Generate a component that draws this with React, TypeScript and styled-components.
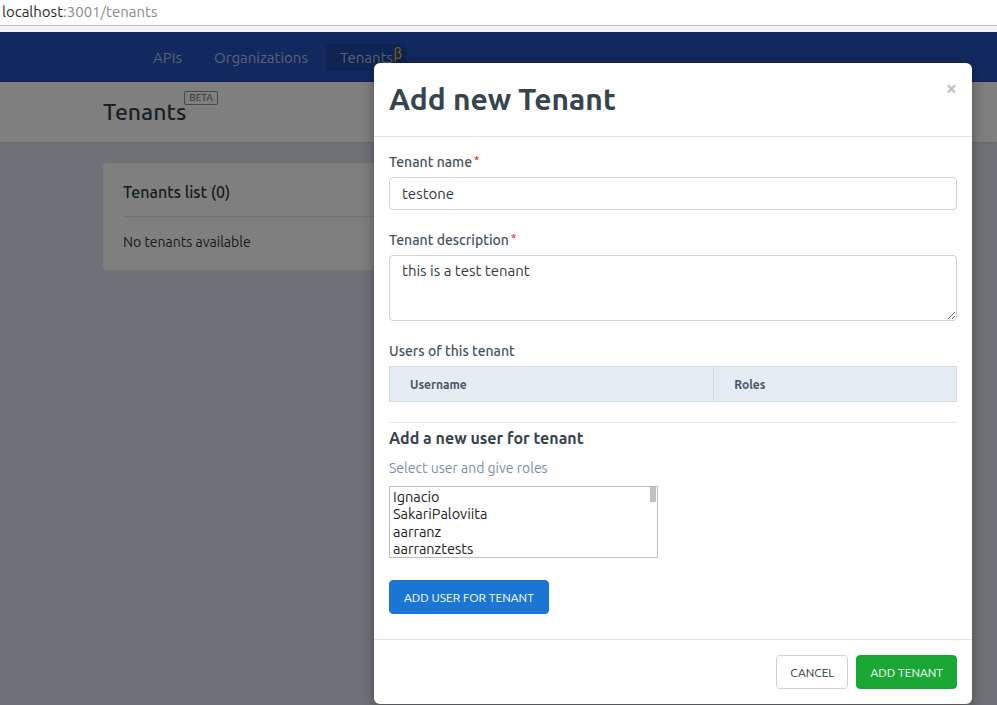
import React from "react";
import styled, { createGlobalStyle } from "styled-components";

const FONT = `"Ubuntu", Lato, "Noto Sans", sans-serif`;

const GlobalStyle = createGlobalStyle`
  html, body { margin: 0; padding: 0; }
  body {
    font-family: ${FONT};
    background: #dee6ee;
    width: 997px;
    height: 705px;
    overflow: hidden;
  }
  * { box-sizing: border-box; }
`;

const Chrome = styled.div`
  height: 32px;
  background: #f3f3f3;
`;

const AddressBar = styled.div`
  height: 26px;
  background: #ffffff;
  border-bottom: 1px solid #c6c6c6;
  padding-left: 2px;
  display: flex;
  align-items: center;
  font-size: 15px;
  color: #2a2a2a;
  line-height: 1;
  padding-bottom: 2px;
`;

const UrlMuted = styled.span`
  color: #8a8a8a;
`;

const Page = styled.div`
  position: relative;
  height: 673px;
`;

const Nav = styled.nav`
  height: 50px;
  background: #2452be;
  display: flex;
  align-items: center;
  gap: 4px;
  padding-left: 139px;
`;

const NavItem = styled.a<{ $active?: boolean }>`
  position: relative;
  display: flex;
  align-items: center;
  height: 27px;
  padding: 0 14px;
  border-radius: 4px;
  font-size: 15px;
  letter-spacing: 0;
  color: rgba(255, 255, 255, 0.66);
  background: ${(p) => (p.$active ? "rgba(0,0,0,0.12)" : "transparent")};
  text-decoration: none;
`;

const Beta = styled.sup`
  position: absolute;
  right: 5px;
  top: 3px;
  color: #f2d000;
  font-size: 14px;
  line-height: 1;
`;

const PageHeader = styled.header`
  height: 60px;
  background: #ffffff;
  padding: 18px 0 0 103px;
  display: flex;
  align-items: flex-start;
  box-shadow: 0 1px 2px rgba(0, 0, 0, 0.08);
`;

const PageTitle = styled.h1`
  margin: 0;
  font-size: 23px;
  font-weight: 500;
  color: #34404c;
  display: flex;
  align-items: flex-start;
  line-height: 1;
`;

const BetaBadge = styled.span`
  font-size: 10px;
  font-weight: 400;
  color: #5a6570;
  border: 1px solid #8a949e;
  border-radius: 2px;
  padding: 1px 4px;
  margin-left: -2px;
  margin-top: -9px;
  line-height: 10px;
`;

const Content = styled.main`
  padding: 21px 104px 0 103px;
`;

const Card = styled.section`
  background: #ffffff;
  border-radius: 4px;
  padding: 20px 20px 19px;
  color: #2e3740;
`;

const CardTitle = styled.h2`
  margin: 0;
  font-size: 16px;
  font-weight: 500;
  line-height: 18px;
  padding-bottom: 15px;
  border-bottom: 1px solid #e2e6ea;
`;

const CardText = styled.p`
  margin: 0;
  padding-top: 16px;
  font-size: 14px;
  line-height: 18px;
`;

const Overlay = styled.div`
  position: absolute;
  inset: 0;
  background: rgba(0, 0, 0, 0.5);
`;

const Modal = styled.div`
  position: absolute;
  left: 374px;
  top: 31px;
  width: 598px;
  background: #ffffff;
  border-radius: 6px;
  box-shadow: 0 4px 14px rgba(0, 0, 0, 0.35);
  display: flex;
  flex-direction: column;
`;

const ModalHeader = styled.div`
  position: relative;
  padding: 20px 15px;
  border-bottom: 1px solid #e3e6e9;
`;

const ModalTitle = styled.h3`
  margin: 0;
  font-size: 30px;
  line-height: 33px;
  font-weight: 700;
  color: #36444f;
`;

const Close = styled.button`
  position: absolute;
  right: 15px;
  top: 13px;
  border: 0;
  background: none;
  padding: 0;
  font-size: 20px;
  font-weight: 700;
  color: #c2c2c2;
  font-family: ${FONT};
  cursor: pointer;
`;

const ModalBody = styled.div`
  padding: 15px 15px 25px;
  display: flex;
  flex-direction: column;
`;

const FormGroup = styled.div`
  margin-bottom: 20px;
  display: flex;
  flex-direction: column;
`;

const Label = styled.label`
  display: block;
  height: 20px;
  font-size: 14px;
  line-height: 20px;
  font-weight: 500;
  color: #45535f;
  margin-bottom: 5px;
`;

const Required = styled.span`
  color: #e02424;
  font-size: 11px;
  line-height: 1;
  margin-left: 2px;
  vertical-align: top;
  position: relative;
  top: 3px;
`;

const Input = styled.input`
  display: block;
  margin: 0;
  height: 33px;
  border: 1px solid #ccd2d8;
  border-radius: 4px;
  padding: 0 12px;
  font-size: 15px;
  font-family: ${FONT};
  color: #333b42;
  outline: none;
`;

const TextArea = styled.textarea`
  display: block;
  margin: 0;
  height: 66px;
  border: 1px solid #ccd2d8;
  border-radius: 4px;
  padding: 6px 12px;
  font-size: 15px;
  font-family: ${FONT};
  color: #333b42;
  resize: vertical;
  outline: none;
`;

const Table = styled.table`
  border-collapse: collapse;
  width: 100%;
`;

const Th = styled.th<{ $w?: string }>`
  height: 35px;
  text-align: left;
  background: #e4ecf4;
  border: 1px solid #d0dbe6;
  padding: 0 20px;
  font-size: 12px;
  font-weight: 700;
  color: #4a5866;
  width: ${(p) => p.$w || "auto"};
`;

const Divider = styled.hr`
  border: 0;
  border-top: 1px solid #e7eaed;
  margin: 0;
`;

const SubHeading = styled.h4`
  margin: 5px 0 0;
  font-size: 16px;
  line-height: 20px;
  font-weight: 700;
  color: #36424d;
`;

const Hint = styled.p`
  margin: 10px 0 0;
  font-size: 14px;
  line-height: 20px;
  color: #7c8ea6;
`;

const SelectWrap = styled.div`
  position: relative;
  margin-top: 8px;
  width: 269px;
  height: 72px;
`;

const UserSelect = styled.select`
  display: block;
  margin: 0;
  width: 269px;
  height: 72px;
  border: 1px solid #bdbdbd;
  border-radius: 0;
  padding: 1px 0 0 3px;
  font-size: 14.5px;
  font-family: ${FONT};
  color: #222;
  outline: none;
  overflow-y: auto;
  option { padding: 0; line-height: 17px; height: 17px; }
`;

const ScrollThumb = styled.span`
  position: absolute;
  right: 2px;
  top: 1px;
  width: 6px;
  height: 15px;
  background: #c1c1c1;
`;

const Button = styled.button<{ $variant: "primary" | "success" | "default" }>`
  height: 34px;
  padding: 0 13px;
  border-radius: 4px;
  font-size: 12px;
  font-family: ${FONT};
  text-transform: uppercase;
  cursor: pointer;
  border: 1px solid
    ${(p) => (p.$variant === "default" ? "#cdd1d5" : p.$variant === "success" ? "#1aa734" : "#1a76d2")};
  background: ${(p) => (p.$variant === "default" ? "#ffffff" : p.$variant === "success" ? "#1aa734" : "#1a76d2")};
  color: ${(p) => (p.$variant === "default" ? "#333a40" : "#ffffff")};
`;

const AddUserButton = styled(Button)`
  margin-top: 22px;
  padding: 0 14px;
  align-self: flex-start;
`;

const ModalFooter = styled.div`
  border-top: 1px solid #e3e6e9;
  padding: 15px 15px 15px;
  display: flex;
  justify-content: flex-end;
  gap: 8px;
`;

const users = [
  "Ignacio",
  "SakariPaloviita",
  "aarranz",
  "aarranztests",
  "admin",
  "alice",
  "bob",
  "carol",
  "dave",
  "erin",
  "frank",
  "grace",
  "heidi",
  "ivan",
  "judy",
  "mallory",
  "oscar",
  "peggy",
];

export default function App() {
  return (
    <>
      <GlobalStyle />
      <Chrome>
        <AddressBar>
          localhost<UrlMuted>:3001/tenants</UrlMuted>
        </AddressBar>
      </Chrome>
      <Page>
        <Nav>
          <NavItem>APIs</NavItem>
          <NavItem>Organizations</NavItem>
          <NavItem $active>
            Tenants<Beta>β</Beta>
          </NavItem>
        </Nav>
        <PageHeader>
          <PageTitle>
            Tenants<BetaBadge>BETA</BetaBadge>
          </PageTitle>
        </PageHeader>
        <Content>
          <Card>
            <CardTitle>Tenants list (0)</CardTitle>
            <CardText>No tenants available</CardText>
          </Card>
        </Content>
        <Overlay />
        <Modal>
          <ModalHeader>
            <ModalTitle>Add new Tenant</ModalTitle>
            <Close>×</Close>
          </ModalHeader>
          <ModalBody>
            <FormGroup>
              <Label>
                Tenant name<Required>*</Required>
              </Label>
              <Input defaultValue="testone" />
            </FormGroup>
            <FormGroup>
              <Label>
                Tenant description<Required>*</Required>
              </Label>
              <TextArea defaultValue="this is a test tenant" />
            </FormGroup>
            <FormGroup>
              <Label>Users of this tenant</Label>
              <Table>
                <thead>
                  <tr>
                    <Th $w="57.2%">Username</Th>
                    <Th>Roles</Th>
                  </tr>
                </thead>
              </Table>
            </FormGroup>
            <Divider />
            <SubHeading>Add a new user for tenant</SubHeading>
            <Hint>Select user and give roles</Hint>
            <SelectWrap>
              <UserSelect multiple size={4}>
                {users.map((u) => (
                  <option key={u}>{u}</option>
                ))}
              </UserSelect>
              <ScrollThumb />
            </SelectWrap>
            <AddUserButton $variant="primary">Add user for tenant</AddUserButton>
          </ModalBody>
          <ModalFooter>
            <Button $variant="default">Cancel</Button>
            <Button $variant="success">Add tenant</Button>
          </ModalFooter>
        </Modal>
      </Page>
    </>
  );
}
